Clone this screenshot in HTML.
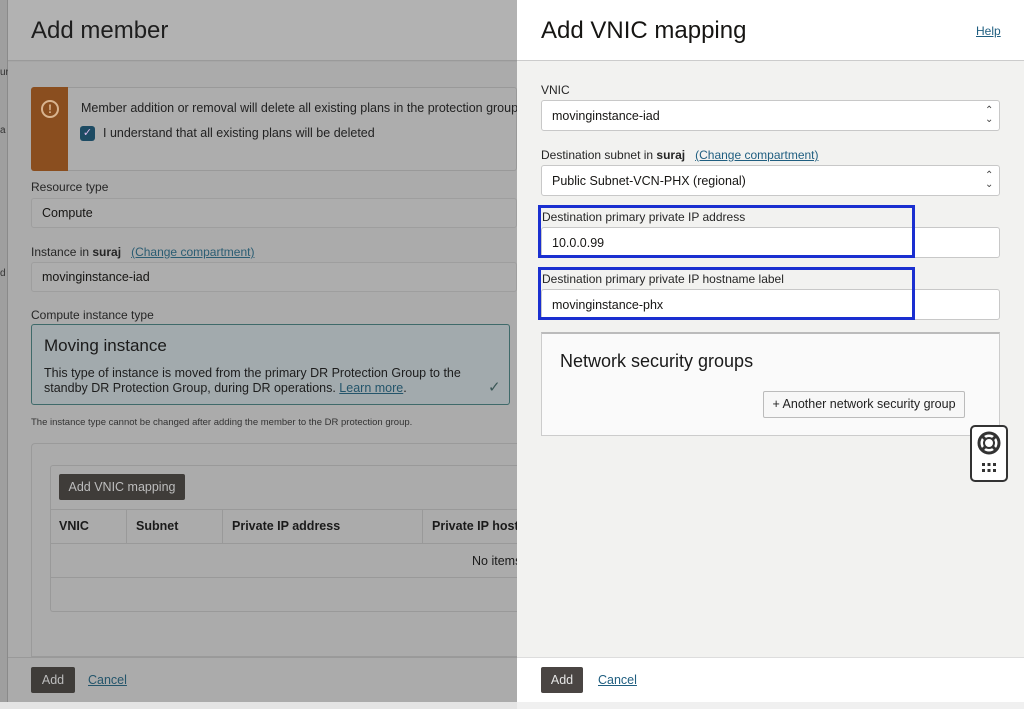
<!DOCTYPE html>
<html><head><style>
*{box-sizing:border-box;margin:0;padding:0}
body{width:1024px;height:709px;overflow:hidden;font-family:"Liberation Sans",sans-serif;background:#a6a6a6;position:relative;color:#161513}
.abs{position:absolute}
.lbl{position:absolute;font-size:12px;color:#262626}
.in{position:absolute;border:1px solid #999;border-radius:3px;font-size:12.5px;padding-left:10px;display:flex;align-items:center}
a{color:#1f5e80;text-decoration:underline}
</style></head><body>
<div class="abs" style="left:0;top:0;width:8px;height:709px;background:#9f9f9f;border-right:1px solid #8a8a8a"></div>
<div class="abs" style="left:0;top:67px;font-size:10px;color:#333">ur</div>
<div class="abs" style="left:0;top:125px;font-size:10px;color:#333">a</div>
<div class="abs" style="left:0;top:268px;font-size:10px;color:#333">d</div>
<div class="abs" style="left:8px;top:0;width:509px;height:61px;background:#b2b2b2;border-bottom:1px solid #9a9a9a"></div>
<div class="abs" style="left:31px;top:17px;font-size:24px;color:#1e1e1e">Add member</div>
<div class="abs" style="left:8px;top:62px;width:509px;height:595px;background:#ababab"></div>
<div class="abs" style="left:31px;top:87px;width:486px;height:84px;background:#adadad;border:1px solid #999;border-radius:3px"></div>
<div class="abs" style="left:31px;top:87px;width:37px;height:84px;background:#8a4e1f;border-radius:3px 0 0 3px"></div>
<div class="abs" style="left:41px;top:100px;width:18px;height:18px;border:2px solid #d9b48f;border-radius:50%;color:#d9b48f;font-size:12px;font-weight:bold;text-align:center;line-height:14px">!</div>
<div class="abs" style="left:81px;top:101px;font-size:12.5px;color:#222;white-space:nowrap">Member addition or removal will delete all existing plans in the protection group</div>
<div class="abs" style="left:80px;top:126px;width:15px;height:15px;background:#1d4b63;border-radius:3px;color:#dbe;font-size:11px;text-align:center;line-height:15px">✓</div>
<div class="abs" style="left:103px;top:126px;font-size:12.5px;color:#222">I understand that all existing plans will be deleted</div>
<div class="lbl" style="left:31px;top:180px">Resource type</div>
<div class="in" style="left:31px;top:198px;width:486px;height:30px;background:#adadad;border-color:#9e9e9e">Compute</div>
<div class="lbl" style="left:31px;top:245px">Instance in <b>suraj</b> &nbsp; <a style="color:#2b5d73">(Change compartment)</a></div>
<div class="in" style="left:31px;top:262px;width:486px;height:30px;background:#adadad;border-color:#9e9e9e">movinginstance-iad</div>
<div class="lbl" style="left:31px;top:308px">Compute instance type</div>
<div class="abs" style="left:31px;top:324px;width:479px;height:81px;background:#a2aaad;border:1px solid #3f6a6a;border-radius:3px"></div>
<div class="abs" style="left:44px;top:336px;font-size:17px;color:#1a1a1a">Moving instance</div>
<div class="abs" style="left:44px;top:366px;font-size:12.5px;line-height:15px;color:#1d1d1d">This type of instance is moved from the primary DR Protection Group to the<br>standby DR Protection Group, during DR operations. <a style="color:#24556b">Learn more</a>.</div>
<div class="abs" style="left:488px;top:378px;font-size:15px;color:#3b5757">✓</div>
<div class="abs" style="left:31px;top:417px;font-size:9.5px;color:#333">The instance type cannot be changed after adding the member to the DR protection group.</div>
<div class="abs" style="left:31px;top:443px;width:486px;height:214px;border:1px solid #9a9a9a;border-right:none;border-radius:4px 0 0 0"></div>
<div class="abs" style="left:50px;top:465px;width:467px;height:147px;border:1px solid #999;border-right:none;border-radius:3px 0 0 3px"></div>
<div class="abs" style="left:59px;top:474px;width:126px;height:26px;background:#3f3c39;color:#bdbdbd;font-size:12.5px;border-radius:2px;text-align:center;line-height:26px">Add VNIC mapping</div>
<div class="abs" style="left:50px;top:509px;width:467px;height:35px;border-top:1px solid #999;border-bottom:1px solid #999"></div>
<div class="abs" style="left:50px;top:577px;width:467px;border-top:1px solid #999"></div>
<div class="abs" style="left:126px;top:509px;height:35px;border-left:1px solid #999"></div>
<div class="abs" style="left:222px;top:509px;height:35px;border-left:1px solid #999"></div>
<div class="abs" style="left:422px;top:509px;height:35px;border-left:1px solid #999"></div>
<div class="abs" style="left:59px;top:519px;font-size:12.5px;font-weight:bold;color:#1a1a1a">VNIC</div>
<div class="abs" style="left:136px;top:519px;font-size:12.5px;font-weight:bold;color:#1a1a1a">Subnet</div>
<div class="abs" style="left:232px;top:519px;font-size:12.5px;font-weight:bold;color:#1a1a1a">Private IP address</div>
<div class="abs" style="left:432px;top:519px;font-size:12.5px;font-weight:bold;color:#1a1a1a;white-space:nowrap;width:85px;overflow:hidden">Private IP hostname</div>
<div class="abs" style="left:472px;top:554px;font-size:12.5px;color:#1a1a1a;width:45px;overflow:hidden;white-space:nowrap">No items</div>
<div class="abs" style="left:8px;top:657px;width:509px;height:45px;background:#ababab;border-top:1px solid #999"></div>
<div class="abs" style="left:31px;top:667px;width:44px;height:26px;background:#3f3c39;color:#bdbdbd;font-size:12.5px;border-radius:2px;text-align:center;line-height:26px">Add</div>
<div class="abs" style="left:88px;top:673px;font-size:12.5px"><a style="color:#24556b">Cancel</a></div>
<div class="abs" style="left:0;top:702px;width:517px;height:7px;background:#e4e4e4"></div>
<div class="abs" style="left:517px;top:0;width:507px;height:709px;background:#f2f2f0"></div>
<div class="abs" style="left:517px;top:0;width:507px;height:61px;background:#fff;border-bottom:1px solid #ccc"></div>
<div class="abs" style="left:541px;top:17px;font-size:24px;color:#161513">Add VNIC mapping</div>
<div class="abs" style="left:976px;top:24px;font-size:12px"><a>Help</a></div>
<div class="lbl" style="left:541px;top:83px">VNIC</div>
<div class="in" style="left:541px;top:100px;width:459px;height:31px;background:#fff;border-color:#c8c8c8">movinginstance-iad</div>
<div class="abs" style="left:985px;top:106px;font-size:10px;line-height:9px;color:#444">&#8963;<br>&#8964;</div>
<div class="lbl" style="left:541px;top:148px">Destination subnet in <b>suraj</b> &nbsp; <a>(Change compartment)</a></div>
<div class="in" style="left:541px;top:165px;width:459px;height:31px;background:#fff;border-color:#c8c8c8">Public Subnet-VCN-PHX (regional)</div>
<div class="abs" style="left:985px;top:171px;font-size:10px;line-height:9px;color:#444">&#8963;<br>&#8964;</div>
<div class="lbl" style="left:542px;top:210px">Destination primary private IP address</div>
<div class="in" style="left:541px;top:227px;width:459px;height:31px;background:#fff;border-color:#c8c8c8">10.0.0.99</div>
<div class="abs" style="left:538px;top:205px;width:377px;height:53px;border:3px solid #1a2fd0"></div>
<div class="lbl" style="left:542px;top:272px">Destination primary private IP hostname label</div>
<div class="in" style="left:541px;top:289px;width:459px;height:31px;background:#fff;border-color:#c8c8c8">movinginstance-phx</div>
<div class="abs" style="left:538px;top:267px;width:377px;height:53px;border:3px solid #1a2fd0"></div>
<div class="abs" style="left:541px;top:332px;width:459px;height:104px;background:#fafafa;border:1px solid #ccc;border-top:2px solid #bbb"></div>
<div class="abs" style="left:560px;top:351px;font-size:18px;color:#1a1a1a">Network security groups</div>
<div class="abs" style="left:763px;top:391px;width:202px;height:27px;background:#f7f7f7;border:1px solid #bbb;border-radius:2px;font-size:12.5px;text-align:center;line-height:25px;color:#222">+ Another network security group</div>
<div class="abs" style="left:970px;top:425px;width:38px;height:57px;background:#fff;border:2px solid #333;border-radius:5px"></div>
<svg class="abs" style="left:974px;top:429px" width="30" height="48" viewBox="0 0 30 48">
<circle cx="15" cy="14" r="10" fill="none" stroke="#333" stroke-width="3"/>
<circle cx="15" cy="14" r="5" fill="none" stroke="#333" stroke-width="2"/>
<g stroke="#333" stroke-width="3"><line x1="8" y1="7" x2="11.5" y2="10.5"/><line x1="22" y1="7" x2="18.5" y2="10.5"/><line x1="8" y1="21" x2="11.5" y2="17.5"/><line x1="22" y1="21" x2="18.5" y2="17.5"/></g>
<g fill="#333"><rect x="8" y="34" width="3" height="3"/><rect x="13.5" y="34" width="3" height="3"/><rect x="19" y="34" width="3" height="3"/><rect x="8" y="40" width="3" height="3"/><rect x="13.5" y="40" width="3" height="3"/><rect x="19" y="40" width="3" height="3"/></g>
</svg>
<div class="abs" style="left:517px;top:657px;width:507px;height:45px;background:#fff;border-top:1px solid #ddd"></div>
<div class="abs" style="left:541px;top:667px;width:42px;height:26px;background:#4a4543;color:#e6e6e6;font-size:12.5px;border-radius:2px;text-align:center;line-height:26px">Add</div>
<div class="abs" style="left:598px;top:673px;font-size:12.5px"><a>Cancel</a></div>
<div class="abs" style="left:517px;top:702px;width:507px;height:7px;background:#f0f0f0"></div>
</body></html>
